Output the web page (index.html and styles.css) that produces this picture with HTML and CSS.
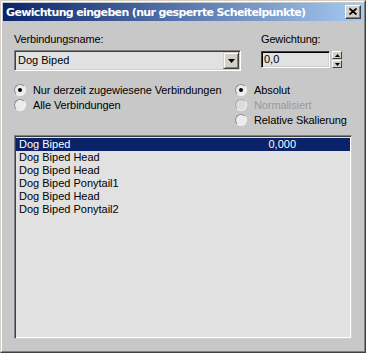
FILE: index.html
```html
<!DOCTYPE html>
<html>
<head>
<meta charset="utf-8">
<link rel="stylesheet" href="styles.css">
</head>
<body>
<div class="window">
  <div class="frame">
    <div class="titlebar">
      <span class="title">Gewichtung eingeben (nur gesperrte Scheitelpunkte)</span>
      <span class="close"><svg width="8" height="7" viewBox="0 0 8 7"><path d="M0.5 0.5 L7.5 6.5 M7.5 0.5 L0.5 6.5" stroke="#000" stroke-width="1.7" fill="none"/></svg></span>
    </div>
    <div class="content">
      <div class="row-top">
        <div class="col-name">
          <div class="label">Verbindungsname:</div>
          <div class="combo">
            <span class="combo-text">Dog Biped</span>
            <span class="dropbtn"><svg width="7" height="4" viewBox="0 0 7 4"><polygon points="0,0 7,0 3.5,4" fill="#000"/></svg></span>
          </div>
        </div>
        <div class="col-weight">
          <div class="label label-weight">Gewichtung:</div>
          <div class="spinner">
            <div class="field">0,0</div>
            <div class="arrows">
              <span class="arrow"><svg width="5" height="3" viewBox="0 0 5 3"><polygon points="2.5,0 5,3 0,3" fill="#000"/></svg></span>
              <span class="arrow"><svg width="5" height="3" viewBox="0 0 5 3"><polygon points="0,0 5,0 2.5,3" fill="#000"/></svg></span>
            </div>
          </div>
        </div>
      </div>
      <div class="options">
        <div class="group">
          <div class="opt"><span class="radio checked"></span><span>Nur derzeit zugewiesene Verbindungen</span></div>
          <div class="opt"><span class="radio"></span><span>Alle Verbindungen</span></div>
        </div>
        <div class="group">
          <div class="opt"><span class="radio checked"></span><span>Absolut</span></div>
          <div class="opt disabled"><span class="radio"></span><span>Normalisiert</span></div>
          <div class="opt"><span class="radio"></span><span>Relative Skalierung</span></div>
        </div>
      </div>
      <div class="list">
        <div class="item selected"><span class="name">Dog Biped</span><span class="value">0,000</span></div>
        <div class="item"><span class="name">Dog Biped Head</span></div>
        <div class="item"><span class="name">Dog Biped Head</span></div>
        <div class="item"><span class="name">Dog Biped Ponytail1</span></div>
        <div class="item"><span class="name">Dog Biped Head</span></div>
        <div class="item"><span class="name">Dog Biped Ponytail2</span></div>
      </div>
    </div>
  </div>
</div>
</body>
</html>
```
FILE: styles.css
```css
* { box-sizing: border-box; }
html, body { margin: 0; padding: 0; }
body {
  width: 366px;
  height: 353px;
  overflow: hidden;
  background: #c8c8c8;
  font-family: "Liberation Sans", Arial, sans-serif;
  font-size: 11px;
  color: #000;
}
.window {
  width: 366px;
  height: 353px;
  display: flex;
  flex-direction: column;
  background: #c8c8c8;
  border: 1px solid;
  border-color: #d4d0c8 #404040 #404040 #d4d0c8;
}
.frame {
  flex: 1;
  display: flex;
  flex-direction: column;
  padding: 1px;
  border: 1px solid;
  border-color: #ffffff #808080 #808080 #ffffff;
}
.titlebar {
  height: 18px;
  flex: none;
  display: flex;
  align-items: center;
  justify-content: space-between;
  padding: 0 2px 0 3px;
  background: linear-gradient(to right, #0a246a, #a6caf0);
}
.title {
  color: #fff;
  font-weight: bold;
  font-size: 11px;
  font-family: "DejaVu Sans", "Liberation Sans", sans-serif;
  letter-spacing: -0.65px;
  white-space: nowrap;
}
.close {
  width: 16px;
  height: 14px;
  display: flex;
  align-items: center;
  justify-content: center;
  background: #d4d0c8;
  border: 1px solid;
  border-color: #ffffff #404040 #404040 #ffffff;
  box-shadow: inset -1px -1px #808080;
  padding-right: 1px;
  padding-bottom: 1px;
}
.content {
  flex: 1;
  display: flex;
  flex-direction: column;
  padding: 12px 11px 11px 11px;
  min-height: 0;
}
.row-top {
  display: flex;
  gap: 20px;
}
.col-name { width: 227px; }
.col-weight { width: 81px; }
.label {
  line-height: 13px;
  height: 13px;
  margin-bottom: 4px;
  white-space: nowrap;
  letter-spacing: -0.15px;
}
.label-weight { margin-bottom: 5px; }
.combo {
  height: 21px;
  display: flex;
  align-items: stretch;
  background: #e1e1e1;
  border: 1px solid;
  border-color: #808080 #ffffff #ffffff #808080;
  box-shadow: inset 1px 1px #404040, inset -1px -1px #d4d0c8;
  padding: 1px;
}
.combo-text {
  flex: 1;
  padding-left: 2px;
  line-height: 17px;
}
.dropbtn {
  width: 16px;
  display: flex;
  align-items: center;
  justify-content: center;
  background: #d4d0c8;
  border: 1px solid;
  border-color: #d4d0c8 #404040 #404040 #d4d0c8;
  box-shadow: inset 1px 1px #ffffff, inset -1px -1px #808080;
}
.spinner {
  display: flex;
  gap: 2px;
  height: 17px;
}
.field {
  width: 69px;
  background: #e1e1e1;
  border: 1px solid;
  border-color: #404040 #ffffff #ffffff #404040;
  box-shadow: inset 1px 1px #000000, inset -1px -1px #d4d0c8;
  padding-left: 2px;
  line-height: 15px;
}
.arrows {
  width: 10px;
  display: flex;
  flex-direction: column;
  gap: 1px;
}
.arrow {
  flex: 1;
  display: flex;
  align-items: center;
  justify-content: center;
  background: #d4d0c8;
  border: 1px solid;
  border-color: #ffffff #404040 #404040 #ffffff;
}
.options {
  display: grid;
  grid-template-columns: 221px auto;
  margin-top: 11px;
}
.opt {
  display: flex;
  align-items: center;
  gap: 7px;
  height: 15px;
  white-space: nowrap;
  letter-spacing: -0.1px;
}
.opt.disabled { color: #9a9a9a; }
.radio {
  width: 12px;
  height: 12px;
  border-radius: 50%;
  flex: none;
  border: 1px solid;
  border-color: #8c8c8c #f4f4f4 #f4f4f4 #8c8c8c;
  background: #ececec;
  position: relative;
}
.opt.disabled .radio { background: #dcdcdc; border-color: #a8a8a8 #f4f4f4 #f4f4f4 #a8a8a8; }
.radio.checked::after {
  content: "";
  position: absolute;
  left: 3px;
  top: 3px;
  width: 4px;
  height: 4px;
  border-radius: 50%;
  background: #000;
}
.list {
  flex: 1;
  margin-top: 8px;
  background: #e1e1e1;
  border: 1px solid;
  border-color: #808080 #d4d0c8 #d4d0c8 #808080;
  box-shadow: inset 1px 1px #404040, inset -1px -1px #ffffff;
  padding: 2px 1px 1px 1px;
}
.item {
  height: 13px;
  line-height: 13px;
  display: flex;
  padding-left: 3px;
  white-space: nowrap;
}
.item .name { flex: 1; }
.item .value { margin-right: 54px; }
.item.selected { background: #0a2268; color: #fff; }
```
